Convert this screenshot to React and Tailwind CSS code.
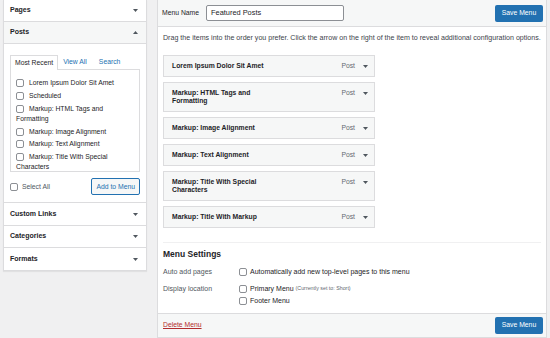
import React from 'react';

const Caret = ({ up = false }) => (
  <svg width="5" height="3" viewBox="0 0 5 3" className={up ? 'rotate-180' : ''}>
    <path d="M0 0 L5 0 L2.5 3 Z" fill="#50575e" />
  </svg>
);

const Box = () => (
  <span className="inline-block w-[8px] h-[8px] shrink-0 rounded-[2px] border border-[#8c8f94] bg-white align-middle" />
);

const Section = ({ title, h = 'h-[22px]', last = false }) => (
  <div className={`${h} flex items-center justify-between pl-[6px] pr-[8px] ${last ? '' : 'border-b border-[#dcdcde]'}`}>
    <span className="font-semibold text-[7px]">{title}</span>
    <Caret />
  </div>
);

// only the entries visible in the scroll box
const posts = [
  'Lorem Ipsum Dolor Sit Amet',
  'Scheduled',
  'Markup: HTML Tags and Formatting',
  'Markup: Image Alignment',
  'Markup: Text Alignment',
  'Markup: Title With Special Characters',
];

const menuItems = [
  'Lorem Ipsum Dolor Sit Amet',
  'Markup: HTML Tags and Formatting',
  'Markup: Image Alignment',
  'Markup: Text Alignment',
  'Markup: Title With Special Characters',
  'Markup: Title With Markup',
];

export default function App() {
  return (
    <div className="w-[550px] h-[338px] overflow-hidden bg-[#f0f0f1] flex items-start font-['Liberation_Sans',Arial,sans-serif] text-[#1d2327] text-[6.8px]">
      {/* left accordion */}
      <div className="ml-[3px] w-[144px] shrink-0 bg-white border border-t-0 border-[#dcdcde] shadow-[0_1px_1px_rgba(0,0,0,0.06)]">
        <Section title="Pages" />
        <div className="h-[22px] flex items-center justify-between pl-[6px] pr-[8px] bg-[#f6f7f7] border-b border-[#dcdcde]">
          <span className="font-semibold text-[7px]">Posts</span>
          <Caret up />
        </div>
        <div className="pl-[6px] pr-[6px] pt-[11px] pb-[7px] border-b border-[#dcdcde]">
          <div className="flex items-end h-[15px]">
            <div className="h-[15px] px-[4px] flex items-center bg-white border border-b-0 border-[#dcdcde] relative z-10">
              Most Recent
            </div>
            <span className="ml-[5px] h-[15px] flex items-center text-[#2271b1]">View All</span>
            <span className="ml-[12px] h-[15px] flex items-center text-[#2271b1]">Search</span>
          </div>
          <div className="-mt-px h-[103px] overflow-hidden border border-[#dcdcde] pl-[5px] pr-[14px] pt-[8px]">
            {posts.map((p) => (
              <div key={p} className="leading-[10px] mb-[2.5px]">
                <Box />
                <span className="ml-[5px] align-middle">{p}</span>
              </div>
            ))}
          </div>
          <div className="flex items-center justify-between mt-[6px] h-[17px]">
            <div className="flex items-center gap-[4px] text-[#50575e] leading-[9px]">
              <Box />
              <span>Select All</span>
            </div>
            <button className="h-[17px] px-[4px] rounded-[2px] border border-[#2271b1] bg-[#f6f7f7] text-[#2271b1] text-[6.8px] leading-[9px]">
              Add to Menu
            </button>
          </div>
        </div>
        <Section title="Custom Links" h="h-[23px]" />
        <Section title="Categories" />
        <Section title="Formats" last />
      </div>

      {/* main editor */}
      <div className="ml-[10px] w-[390px] h-[338px] shrink-0 bg-white border border-t-0 border-[#dcdcde] flex flex-col">
        <div className="h-[27px] shrink-0 bg-[#f6f7f7] border-b border-[#dcdcde] flex items-center pl-[4px] pr-[3px]">
          <span className="text-[#1d2327]">Menu Name</span>
          <div className="ml-[7px] w-[138px] h-[16px] rounded-[2px] border border-[#8c8f94] bg-white flex items-center px-[4px] text-[7.4px]">
            Featured Posts
          </div>
          <button className="ml-auto w-[48px] h-[17px] rounded-[2px] bg-[#2271b1] text-white text-[6.8px]">Save Menu</button>
        </div>

        <div className="flex-1 px-[5px]">
          <p className="mt-[7px] leading-[8px] text-[7.1px] text-[#3c434a]">
            Drag the items into the order you prefer. Click the arrow on the right of the item to reveal additional configuration options.
          </p>
          <div className="mt-[13px] flex flex-col gap-[5px]">
            {menuItems.map((m) => (
              <div key={m} className="w-[212px] bg-[#f6f7f7] border border-[#dcdcde] flex items-start pl-[8px] pr-[6px] py-[6px] leading-[8px]">
                <span className="w-[100px] font-semibold">{m}</span>
                <span className="ml-auto text-[#646970]">Post</span>
                <span className="ml-[8px] mt-[2.5px]"><Caret /></span>
              </div>
            ))}
          </div>
          <div className="mt-[14px] border-t border-[#f0f0f1]" />
          <h3 className="mt-[6px] text-[8.5px] font-semibold leading-[10px]">Menu Settings</h3>
          <div className="mt-[8px] flex items-center text-[7px]">
            <span className="w-[76px] text-[#50575e]">Auto add pages</span>
            <Box />
            <span className="ml-[3px]">Automatically add new top-level pages to this menu</span>
          </div>
          <div className="mt-[6px] flex items-start text-[7px]">
            <span className="w-[76px] text-[#50575e] leading-[9px]">Display location</span>
            <div className="flex flex-col gap-[2px]">
              <div className="flex items-center">
                <Box />
                <span className="ml-[3px]">Primary Menu</span>
                <span className="ml-[2px] text-[5.3px] text-[#646970]">(Currently set to: Short)</span>
              </div>
              <div className="flex items-center">
                <Box />
                <span className="ml-[3px]">Footer Menu</span>
              </div>
            </div>
          </div>
        </div>

        <div className="h-[24px] shrink-0 bg-[#f6f7f7] border-t border-[#dcdcde] flex items-center justify-between pl-[5px] pr-[3px]">
          <span className="text-[#b32d2e] underline">Delete Menu</span>
          <button className="w-[48px] h-[17px] rounded-[2px] bg-[#2271b1] text-white text-[6.8px]">Save Menu</button>
        </div>
      </div>
    </div>
  );
}
